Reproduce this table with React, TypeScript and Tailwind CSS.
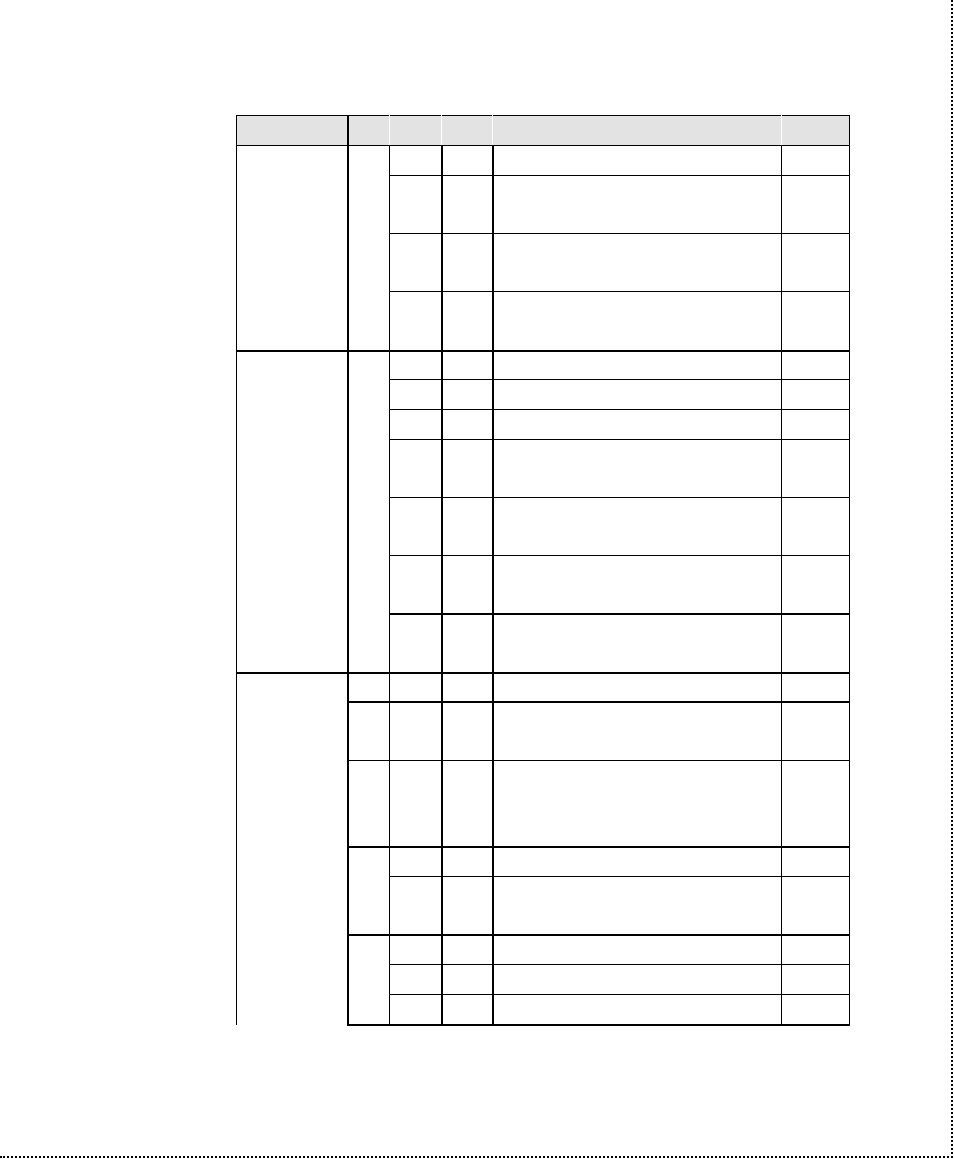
import React from "react";

// empty form grid: lines only, no text
const td = "border border-black p-0";
const thHead = "border-y border-black bg-[#e3e3e3] p-0";

const Tail = ({ thickTop, thickBottom }: { thickTop?: boolean; thickBottom?: boolean }) => {
  const t = thickTop ? " border-t-2" : "";
  const b = thickBottom ? " border-b-2" : "";
  return (
    <>
      <td className={`${td} border-r-2${t}${b}`} />
      <td className={`${td} border-r-2${t}${b}`} />
      <td className={`${td}${t}${b}`} />
      <td className={`${td}${t}${b}`} />
    </>
  );
};

const App = () => (
  <div className="w-[954px] h-[1159px] bg-white font-['Liberation_Sans',sans-serif]">
    <div className="w-[953px] h-[1158px] border-r-2 border-b-2 border-dotted border-black pt-[115px] pl-[236px]">
      <table className="table-fixed border-collapse w-[613px]">
        <colgroup>
          <col className="w-[111px]" />
          <col className="w-[42px]" />
          <col className="w-[52px]" />
          <col className="w-[51px]" />
          <col className="w-[289px]" />
          <col className="w-[68px]" />
        </colgroup>
        <thead>
          <tr className="h-[30px]">
            <th className={`${thHead} border-l border-l-black border-r-2 border-r-black`} />
            <th className={`${thHead} border-r border-r-white`} />
            <th className={`${thHead} border-x border-x-white`} />
            <th className={`${thHead} border-x border-x-white`} />
            <th className={`${thHead} border-x border-x-white`} />
            <th className={`${thHead} border-l border-l-white border-r border-r-black`} />
          </tr>
        </thead>
        <tbody>
          <tr className="h-[30px]">
            <td rowSpan={4} className={`${td} border-r-2 border-b-2`} />
            <td rowSpan={4} className={`${td} border-b-2`} />
            <Tail />
          </tr>
          <tr className="h-[58px]"><Tail /></tr>
          <tr className="h-[58px]"><Tail /></tr>
          <tr className="h-[59px]"><Tail /></tr>

          <tr className="h-[29px]">
            <td rowSpan={7} className={`${td} border-r-2 border-t-2 border-b-2`} />
            <td rowSpan={7} className={`${td} border-t-2 border-b-2`} />
            <Tail thickTop />
          </tr>
          <tr className="h-[30px]"><Tail /></tr>
          <tr className="h-[30px]"><Tail /></tr>
          <tr className="h-[58px]"><Tail /></tr>
          <tr className="h-[58px]"><Tail /></tr>
          <tr className="h-[58px]"><Tail /></tr>
          <tr className="h-[59px]"><Tail thickTop /></tr>

          <tr className="h-[29px]">
            <td rowSpan={8} className={`${td} border-r-2 border-t-2 border-b-0`} />
            <td className={`${td} border-t-2`} />
            <Tail thickTop />
          </tr>
          <tr className="h-[59px]">
            <td className={`${td} border-t-2`} />
            <Tail thickTop />
          </tr>
          <tr className="h-[86px]">
            <td className={td} />
            <Tail />
          </tr>
          <tr className="h-[30px]">
            <td rowSpan={2} className={`${td} border-t-2`} />
            <Tail thickTop />
          </tr>
          <tr className="h-[58px]"><Tail /></tr>
          <tr className="h-[30px]">
            <td rowSpan={3} className={`${td} border-t-2 border-b-2`} />
            <Tail thickTop />
          </tr>
          <tr className="h-[30px]"><Tail /></tr>
          <tr className="h-[30px]"><Tail thickBottom /></tr>
        </tbody>
      </table>
    </div>
  </div>
);

export default App;
